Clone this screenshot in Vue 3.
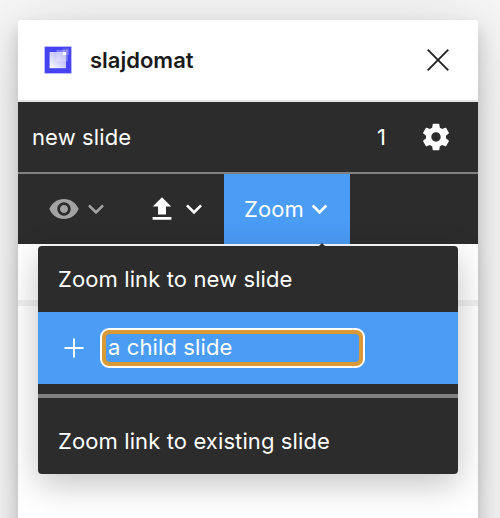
<script setup>
import { ref } from 'vue'

const childName = ref('a child slide')
const slideName = 'new slide'
const slideNumber = 1
</script>

<template>
  <main class="desktop">
    <section class="panel">
      <header class="titlebar">
        <svg class="logo" width="28" height="28" viewBox="0 0 28 28">
          <defs>
            <linearGradient id="fade" x1="0" y1="1" x2="1" y2="0">
              <stop offset="0" stop-color="#fff" />
              <stop offset="1" stop-color="#fff" stop-opacity="0.5" />
            </linearGradient>
          </defs>
          <rect x="0.3" y="0.3" width="27.4" height="27.4" fill="#a09ff8" />
          <rect x="1" y="1" width="26" height="26" fill="#4644f2" />
          <rect x="5.6" y="6" width="16.4" height="16.2" fill="url(#fade)" />
          <rect x="12.5" y="4" width="11.3" height="11.5" fill="#fff" fill-opacity="0.28" />
          <rect x="18.5" y="2.5" width="6.5" height="6.5" fill="#fff" fill-opacity="0.2" />
          <rect x="19" y="6" width="3" height="3" fill="#fff" />
        </svg>
        <h1 class="title">slajdomat</h1>
        <svg class="close" width="22" height="22" viewBox="0 0 22 22">
          <path d="M0.7 0.7 21.3 21.3M21.3 0.7 0.7 21.3" fill="none" stroke="#222" stroke-width="1.9" />
        </svg>
      </header>

      <div class="slide-row">
        <span class="name">{{ slideName }}</span>
        <span class="number">{{ slideNumber }}</span>
        <svg class="gear" width="32" height="32" viewBox="0 0 24 24" fill="#fff">
          <path d="M19.43 12.98c.04-.32.07-.64.07-.98s-.03-.66-.07-.98l2.11-1.65c.19-.15.24-.42.12-.64l-2-3.46c-.12-.22-.39-.3-.61-.22l-2.49 1c-.52-.4-1.08-.73-1.69-.98l-.38-2.65C14.46 2.18 14.25 2 14 2h-4c-.25 0-.46.18-.49.42l-.38 2.65c-.61.25-1.17.59-1.69.98l-2.49-1c-.23-.09-.49 0-.61.22l-2 3.46c-.13.22-.07.49.12.64l2.11 1.65c-.04.32-.07.65-.07.98s.03.66.07.98l-2.11 1.65c-.19.15-.24.42-.12.64l2 3.46c.12.22.39.3.61.22l2.49-1c.52.4 1.08.73 1.69.98l.38 2.65c.03.24.24.42.49.42h4c.25 0 .46-.18.49-.42l.38-2.65c.61-.25 1.17-.59 1.69-.98l2.49 1c.23.09.49 0 .61-.22l2-3.46c.12-.22.07-.49-.12-.64l-2.11-1.65zM12 15.5c-1.93 0-3.5-1.57-3.5-3.5s1.57-3.5 3.5-3.5 3.5 1.57 3.5 3.5-1.57 3.5-3.5 3.5z" />
        </svg>
      </div>

      <nav class="toolbar">
        <button class="tool view">
          <svg width="32" height="32" viewBox="0 0 24 24" fill="currentColor">
            <path d="M12 4.5C7 4.5 2.73 7.61 1 12c1.73 4.39 6 7.5 11 7.5s9.27-3.11 11-7.5c-1.73-4.39-6-7.5-11-7.5zM12 17c-2.76 0-5-2.24-5-5s2.24-5 5-5 5 2.24 5 5-2.24 5-5 5zm0-8c-1.66 0-3 1.34-3 3s1.34 3 3 3 3-1.34 3-3-1.34-3-3-3z" />
          </svg>
          <svg width="32" height="32" viewBox="0 0 24 24" fill="currentColor">
            <path d="M16.59 8.59 12 13.17 7.41 8.59 6 10l6 6 6-6z" />
          </svg>
        </button>
        <button class="tool export">
          <svg width="32" height="32" viewBox="0 0 32 32" fill="currentColor">
            <path d="M16 4.2 25.2 13.5H20V21.5H12V13.5H6.8zM6.6 24H25.4V26.7H6.6z" />
          </svg>
          <svg width="32" height="32" viewBox="0 0 24 24" fill="currentColor">
            <path d="M16.59 8.59 12 13.17 7.41 8.59 6 10l6 6 6-6z" />
          </svg>
        </button>
        <button class="tool zoom">
          <span class="zoom-label">Zoom</span>
          <svg width="32" height="32" viewBox="0 0 24 24" fill="currentColor">
            <path d="M16.59 8.59 12 13.17 7.41 8.59 6 10l6 6 6-6z" />
          </svg>
        </button>
      </nav>

      <div class="content"></div>

      <div class="menu">
        <svg class="pointer" width="8" height="4" viewBox="0 0 8 4"><path d="M0 4 4 0 8 4z" fill="#2c2c2c" /></svg>
        <div class="menu-item first">Zoom link to new slide</div>
        <div class="menu-item create">
          <svg class="plus" width="20" height="20" viewBox="0 0 20 20">
            <path d="M10 0.5V19.5M0.5 10H19.5" stroke="#fff" stroke-width="2" />
          </svg>
          <div class="field-ring">
            <input v-model="childName" class="field" type="text" spellcheck="false" />
          </div>
        </div>
        <div class="divider"></div>
        <div class="menu-item last">Zoom link to existing slide</div>
      </div>
    </section>
  </main>
</template>

<style>
body {
  margin: 0;
  overflow: hidden;
}
</style>

<style scoped>
.desktop {
  box-sizing: border-box;
  height: 518px;
  padding: 20px 22px 0 18px;
  overflow: hidden;
  background: #f7f7f7;
  font-family: Inter, "Liberation Sans", sans-serif;
  font-size: 22px;
  letter-spacing: 0.11px;
  color: #fff;
}
.panel {
  position: relative;
  height: 620px;
  border-radius: 4px 4px 0 0;
  background: #fff;
  box-shadow: 0 10px 70px rgba(0, 0, 0, 0.16), 0 10px 18px rgba(0, 0, 0, 0.19);
}
.titlebar {
  display: flex;
  align-items: center;
  box-sizing: border-box;
  height: 82px;
  padding: 0 29px 0 26px;
  border-bottom: 2px solid #e5e5e5;
}
.title {
  flex: 1;
  margin: 0 0 0 18px;
  font-size: 22px;
  font-weight: 600;
  letter-spacing: 0;
  color: #1a1a1a;
}
.slide-row {
  display: flex;
  align-items: center;
  height: 70px;
  padding: 0 26px 0 14px;
  border-bottom: 2px solid #808080;
  background: #2c2c2c;
}
.name {
  flex: 1;
}
.number {
  margin-right: 34px;
}
.toolbar {
  display: flex;
  height: 70px;
  background: #2c2c2c;
}
.tool {
  display: flex;
  align-items: center;
  padding: 0;
  border: 0;
  background: none;
  font: inherit;
  letter-spacing: inherit;
  color: #fff;
}
.view {
  padding: 0 18px 0 30px;
  color: #a3a3a3;
}
.export {
  padding: 0 14px 0 16px;
}
.zoom {
  justify-content: space-between;
  box-sizing: border-box;
  width: 126px;
  padding: 0 15px 0 20px;
  background: #4b9cf5;
}
.content {
  height: 56px;
  border-bottom: 6px solid #f0f0f0;
}
.menu {
  position: absolute;
  top: 226px;
  left: 20px;
  width: 420px;
  border-radius: 4px;
  background: #2c2c2c;
  box-shadow: 0 10px 34px rgba(0, 0, 0, 0.24);
}
.pointer {
  position: absolute;
  top: -3px;
  left: 280px;
}
.menu-item {
  display: flex;
  align-items: center;
  padding: 0 20px;
}
.first {
  height: 66px;
}
.create {
  height: 72px;
  padding: 0 0 0 26px;
  background: #4b9cf5;
}
.field-ring {
  display: flex;
  box-sizing: border-box;
  width: 265px;
  height: 40px;
  margin-left: 16px;
  border: 2px solid #fff;
  border-radius: 9px;
  background: #d99a35;
}
.field {
  box-sizing: border-box;
  flex: 1;
  min-width: 0;
  margin: 4px;
  padding: 0 0 2px 2px;
  border: 0;
  border-radius: 4px;
  outline: none;
  background: #4b9cf5;
  font: inherit;
  letter-spacing: inherit;
  color: #fff;
}
.divider {
  height: 4px;
  margin-top: 10px;
  background: #808080;
}
.last {
  height: 66px;
  padding-top: 10px;
}
</style>
